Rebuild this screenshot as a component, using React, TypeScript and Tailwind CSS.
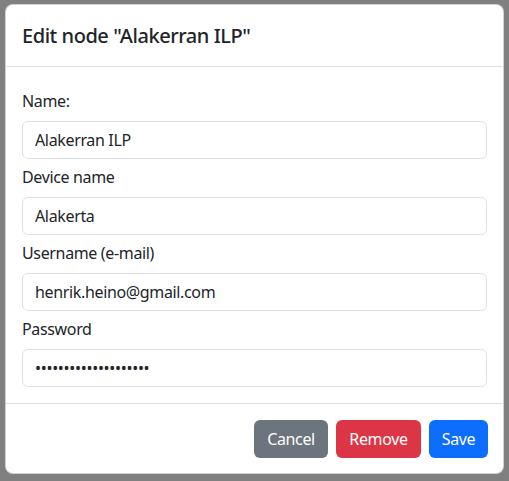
export default function App() {
  const font = { fontFamily: '"Noto Sans", "Open Sans", sans-serif' };
  const fields = [
    { label: "Name:", value: "Alakerran ILP", type: "text" },
    { label: "Device name", value: "Alakerta", type: "text" },
    { label: "Username (e-mail)", value: "henrik.heino@gmail.com", type: "text" },
    { label: "Password", value: "xxxxxxxxxxxxxxxxxxxx", type: "password" },
  ];
  return (
    <div
      className="w-[509px] h-[481px] bg-[#808080] pt-[4px] pl-[5px] text-[#212529] tracking-[-0.35px]"
      style={font}
    >
      <div className="w-[499px] bg-white border border-black/[0.175] rounded-lg flex flex-col overflow-hidden">
        <div className="h-[62px] px-4 flex items-center border-b border-[#dee2e6]">
          <h5 className="text-[20px] font-medium leading-[1.2] tracking-[-0.45px]">Edit node "Alakerran ILP"</h5>
        </div>
        <div className="px-4 pt-[22px] pb-[16px] flex flex-col gap-[6px] border-b border-[#dee2e6]">
          {fields.map((f) => (
            <div key={f.label} className="flex flex-col">
              <label className="text-[16px] leading-[24px] mb-2">{f.label}</label>
              <input
                type={f.type}
                defaultValue={f.value}
                readOnly
                className={
                  "h-[38px] w-full border border-[#dee2e6] rounded-md px-3 text-[16px] text-[#212529] bg-white outline-none " +
                  (f.type === "password" ? "tracking-[-0.3px]" : "tracking-[-0.35px]")
                }
                style={font}
              />
            </div>
          ))}
        </div>
        <div className="flex justify-end gap-2 pt-4 pb-[15px] pr-[15px]">
          <button className="h-[38px] w-[74px] rounded-md bg-[#6c757d] text-white text-[16px]">Cancel</button>
          <button className="h-[38px] w-[85px] rounded-md bg-[#dc3545] text-white text-[16px]">Remove</button>
          <button className="h-[38px] w-[59px] rounded-md bg-[#0d6efd] text-white text-[16px]">Save</button>
        </div>
      </div>
    </div>
  );
}
